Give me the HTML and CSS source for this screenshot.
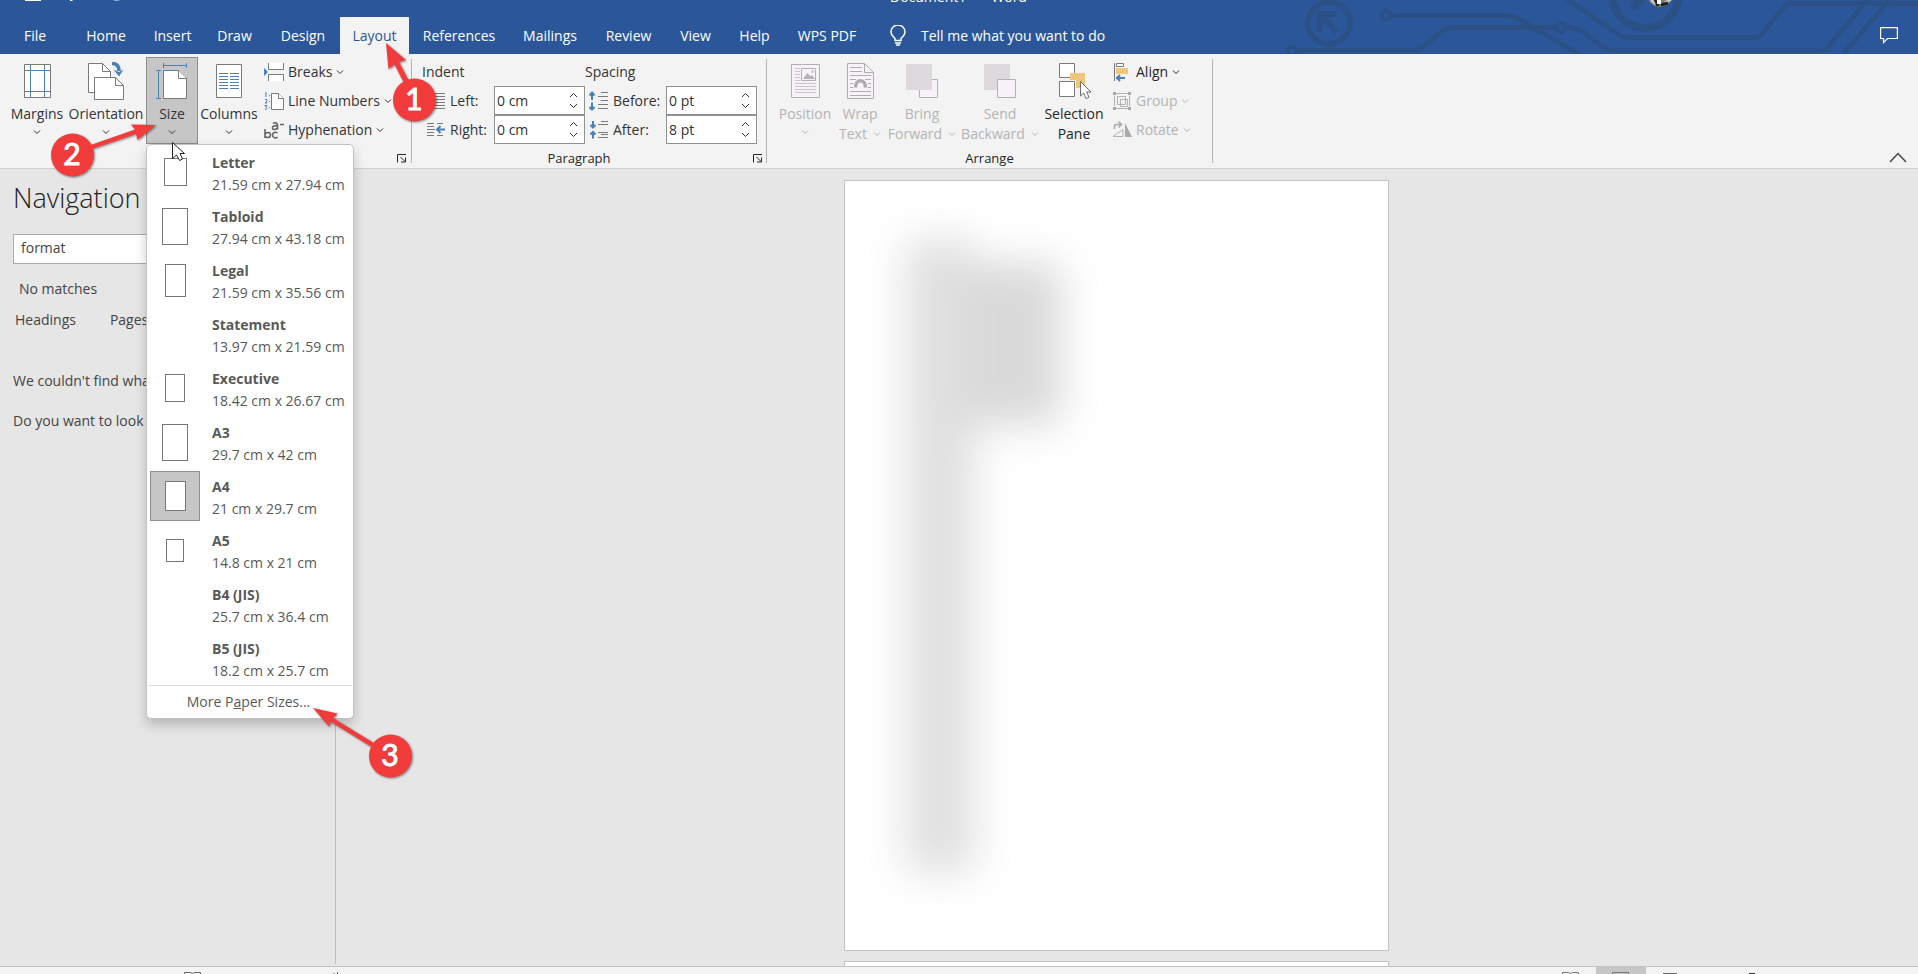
FILE: index.html
```html
<!DOCTYPE html>
<html lang="en">
<head>
<meta charset="utf-8">
<title>Document1 - Word</title>
<link rel="stylesheet" href="styles.css">
</head>
<body>
<svg class="defs" width="0" height="0" aria-hidden="true">
  <symbol id="chev" viewBox="0 0 8 6"><path d="M1 1.5l3 3 3-3" fill="none" stroke="currentColor"/></symbol>
  <symbol id="up" viewBox="0 0 9 6"><path d="M1 5l3.500-3.500L8 5" fill="none" stroke="currentColor"/></symbol>
  <symbol id="down" viewBox="0 0 9 6"><path d="M1 1l3.500 3.500L8 1" fill="none" stroke="currentColor"/></symbol>
  <symbol id="launch" viewBox="0 0 10 9"><path d="M.5 8.500V.5H9M3.500 3l4.500 4.500M8.500 3.500v4.500H4" fill="none" stroke="currentColor"/></symbol>
</svg>

<header class="top">
  <svg class="circuit" viewBox="0 0 648 54" width="648" height="54" fill="none" stroke="#2b5086" stroke-width="5" aria-hidden="true">
    <circle cx="59" cy="23" r="21" stroke-width="6"/>
    <path d="M67 14H50V32M51 15l16 17" stroke-width="6"/>
    <circle cx="116" cy="15" r="4.500" stroke-width="4"/>
    <path d="M122 15.500H238C245 15.500 249 19 254 22L310 55"/>
    <circle cx="22" cy="51" r="4.500" stroke-width="4"/>
    <path d="M26 51H147L174 30Q177 27.500 181 27.500H286"/>
    <circle cx="291" cy="27.500" r="4.500" stroke-width="4"/>
    <path d="M297 27.500C308 27 314 32 320 37L336 49Q338 50.500 341 50.500H550Q555 50.500 558 47L600-3"/>
    <path d="M294-3L350 35.500Q353 37.500 356 37.500H486Q489 37.500 491 35L515 6Q517 3.500 520 3.500H648M573 54L622-3"/>
    <circle cx="375.500" cy="-5" r="33" stroke-width="8"/>
    <path d="M362 8L376-6" stroke-width="8"/>
    <circle cx="390" cy="-6" r="13" fill="#777" stroke="none"/>
    <path d="M381 0l5 4M395 3l6-4" stroke="#c4c4c4" stroke-width="3"/>
    <path d="M385-1l3 7M391 5l7-2" stroke="#222" stroke-width="3"/>
    <path d="M389-1v5" stroke="#fff" stroke-width="4"/>
  </svg>
  <div class="titlebar">
    <svg width="130" height="3" viewBox="0 0 130 3" fill="#fff" aria-hidden="true"><path d="M25 0h16v1H25zM70 0h3l-1 1h-2z"/><path d="M113 0h7l-2 1h-3z" opacity=".5"/></svg>
    <p class="doc-title"><span>Document1</span><span>Word</span></p>
  </div>
  <nav class="tabs" aria-label="Ribbon tabs">
    <button>File</button><button>Home</button><button>Insert</button><button>Draw</button><button>Design</button><button class="active">Layout</button><button>References</button><button>Mailings</button><button>Review</button><button>View</button><button>Help</button><button>WPS PDF</button>
    <button class="tell">
      <svg width="16" height="21" viewBox="0 0 16 21" fill="none" stroke="#fff" stroke-width="1.500"><path d="M5 15.500V13.500C3.500 11.500 1 10.500 1 7A6.500 6.500 0 0 1 15 7C15 10.500 12.500 11.500 11 13.500V15.500ZM5 18h6M6 20h4"/></svg>
      Tell me what you want to do</button>
    <button class="comment" aria-label="Comments"><svg width="18" height="17" viewBox="0 0 18 17" fill="none" stroke="#fff" stroke-width="1.200"><path d="M.6.6H17.400V11.500H7.500L3.500 15.500V11.500H.6Z"/></svg></button>
  </nav>
</header>

<section class="ribbon" aria-label="Layout ribbon">
  <div class="group setup">
    <div class="big-row">
      <button class="big">
        <svg width="36" height="38" viewBox="0 0 36 38" fill="none"><path d="M5.500 2.500h26v33h-26z" fill="#fff" stroke="#7a7a7a"/><path d="M11.500 3v32M25.500 3v32M6 8.500h25M6 29.500h25" stroke="#4a81b8"/></svg>
        <span>Margins</span><svg class="chev low"><use href="#chev"/></svg></button>
      <button class="big">
        <svg width="36" height="38" viewBox="0 0 36 38" fill="#fff" stroke="#7a7a7a"><path d="M6.500 30.500H.5V1.500H14.500L22.500 9.500V20H6.500Z"/><path d="M14.500 1.500V9.500H22.500" fill="none"/><path d="M6.500 15.500H27.500L35.500 23.500V37.500H6.500Z"/><path d="M27.500 15.500V23.500H35.500" fill="none"/><path d="M24 1.500C28.500 1.500 31 4 31 9" fill="none" stroke="#4a81b8" stroke-width="3.500"/><path d="M25.500 7.500L31 10L35.500 7.500L31 14.500Z" fill="#4a81b8" stroke="none"/></svg>
        <span>Orientation</span><svg class="chev low"><use href="#chev"/></svg></button>
      <div class="size-wrap">
        <button class="big pressed" aria-expanded="true">
          <svg width="36" height="38" viewBox="0 0 36 38" fill="#fff" stroke="#7a7a7a"><path d="M9.500 8.500H24.500L32.500 16.500V36.500H9.500Z"/><path d="M24.500 8.500V16.500H32.500"/><path d="M9.500 3.500H32.500M9.500 1v5M32.500 1v5M4.500 8.500V36.500M2 8.500h5M2 36.500h5" stroke="#4a81b8"/></svg>
          <span>Size</span><svg class="chev low"><use href="#chev"/></svg></button>
        <div class="menu" role="menu">
          <button class="item" role="menuitem"><span class="thumb"><i class="sheet letter"></i></span><span class="names"><b>Letter</b><span>21.59 cm x 27.94 cm</span></span></button>
          <button class="item" role="menuitem"><span class="thumb"><i class="sheet large"></i></span><span class="names"><b>Tabloid</b><span>27.94 cm x 43.18 cm</span></span></button>
          <button class="item" role="menuitem"><span class="thumb"><i class="sheet legal"></i></span><span class="names"><b>Legal</b><span>21.59 cm x 35.56 cm</span></span></button>
          <button class="item" role="menuitem"><span class="thumb"></span><span class="names"><b>Statement</b><span>13.97 cm x 21.59 cm</span></span></button>
          <button class="item" role="menuitem"><span class="thumb"><i class="sheet exec"></i></span><span class="names"><b>Executive</b><span>18.42 cm x 26.67 cm</span></span></button>
          <button class="item" role="menuitem"><span class="thumb"><i class="sheet large"></i></span><span class="names"><b>A3</b><span>29.7 cm x 42 cm</span></span></button>
          <button class="item" role="menuitem"><span class="thumb chosen"><i class="sheet a4"></i></span><span class="names"><b>A4</b><span>21 cm x 29.7 cm</span></span></button>
          <button class="item" role="menuitem"><span class="thumb"><i class="sheet a5"></i></span><span class="names"><b>A5</b><span>14.8 cm x 21 cm</span></span></button>
          <button class="item" role="menuitem"><span class="thumb"></span><span class="names"><b>B4 (JIS)</b><span>25.7 cm x 36.4 cm</span></span></button>
          <button class="item" role="menuitem"><span class="thumb"></span><span class="names"><b>B5 (JIS)</b><span>18.2 cm x 25.7 cm</span></span></button>
          <button class="more" role="menuitem">More P<u>a</u>per Sizes...</button>
        </div>
      </div>
      <button class="big">
        <svg width="36" height="38" viewBox="0 0 36 38" fill="none"><path d="M5.500 2.500h25v33h-25z" fill="#fff" stroke="#7a7a7a"/><path d="M8 11.500h9M19 11.500h9M8 14.500h9M19 14.500h9M8 17.500h9M19 17.500h9M8 20.500h9M19 20.500h9M8 23.500h9M19 23.500h9M8 26.500h9M19 26.500h9" stroke="#4a81b8"/></svg>
        <span>Columns</span><svg class="chev low"><use href="#chev"/></svg></button>
      <div class="stack">
        <button><svg width="20" height="20" viewBox="0 0 20 20" fill="#fff" stroke="#7a7a7a"><path d="M4.500 1v6.500h15V1"/><path d="M4.500 19v-6.500h15V19"/><path d="M0 6l4 4-4 4z" fill="#4a81b8" stroke="none"/></svg>Breaks<svg class="chev"><use href="#chev"/></svg></button>
        <button><svg width="20" height="20" viewBox="0 0 20 20" fill="#fff" stroke="#7a7a7a"><path d="M7.500 2.500h7l5 5v11h-12z"/><path d="M14.500 2.500v5h5"/><path d="M1 2.500l1-1V6M1 8.500h2v1.500l-2 2h2.500M.5 14.500h2.500l-1.500 1.500c2 0 2 2.500-.5 2.500M5 4.500h1M5 10.500h1M5 16.500h1" fill="none" stroke="#4a81b8"/></svg>Line Numbers<svg class="chev"><use href="#chev"/></svg></button>
        <button><svg width="20" height="20" viewBox="0 0 20 20" fill="none" stroke="#5f5f5f" stroke-width="1.500"><path d="M1 9v9M1 14.500c1-3 5.500-2.500 5.500.5s-4.500 3.500-5.500 1M13.500 13c-2-1.500-5-.5-5 2s3 4 5 2M9 3.500c2-1.500 4.500-.5 4.500 1.500v4.500M13.500 5.500C9 5.500 8 7 8.500 8.500s4 1.500 5-1M16 4.500h4"/></svg>Hyphenation<svg class="chev"><use href="#chev"/></svg></button>
      </div>
    </div>
    <div class="caption"><span></span><button aria-label="Page Setup settings"><svg width="10" height="9"><use href="#launch"/></svg></button></div>
  </div>
  <div class="sep"></div>

  <div class="group para">
    <div class="para-cols">
      <div class="fields indent">
        <p>Indent</p>
        <div class="row"><svg width="20" height="20" viewBox="0 0 20 20" stroke="#7a7a7a"><path d="M2 2.500h17M9 5.500h10M9 8.500h10M9 11.500h10M9 14.500h10M2 17.500h17"/></svg>
          <label for="il">Left:</label><div class="spin"><input id="il" value="0 cm"><span class="arrows"><button aria-label="More"><svg width="9" height="6"><use href="#up"/></svg></button><button aria-label="Less"><svg width="9" height="6"><use href="#down"/></svg></button></span></div></div>
        <div class="row"><svg width="20" height="20" viewBox="0 0 20 20" stroke="#7a7a7a"><path d="M1 3.500h7M11 3.500h6M1 6.500h7M1 9.500h8M1 12.500h7M1 15.500h7M11 15.500h6"/><path d="M11 9.500h8M14.500 6l-3.500 3.500 3.500 3.500" fill="none" stroke="#4a81b8" stroke-width="2"/></svg>
          <label for="ir">Right:</label><div class="spin"><input id="ir" value="0 cm"><span class="arrows"><button aria-label="More"><svg width="9" height="6"><use href="#up"/></svg></button><button aria-label="Less"><svg width="9" height="6"><use href="#down"/></svg></button></span></div></div>
      </div>
      <div class="fields spacing">
        <p>Spacing</p>
        <div class="row"><svg width="20" height="20" viewBox="0 0 20 20" stroke="#7a7a7a"><path d="M12 1.500h7M9 5.500h10M12 9.500h7M9 13.500h10M9 17.500h10" /><path d="M3 2v7M.5 4.500L3 1.500l2.500 3M3 11.500v7M.5 16L3 18.500l2.500-2.500" fill="none" stroke="#4a81b8" stroke-width="2"/></svg>
          <label for="sb">Before:</label><div class="spin"><input id="sb" value="0 pt"><span class="arrows"><button aria-label="More"><svg width="9" height="6"><use href="#up"/></svg></button><button aria-label="Less"><svg width="9" height="6"><use href="#down"/></svg></button></span></div></div>
        <div class="row"><svg width="20" height="20" viewBox="0 0 20 20" stroke="#7a7a7a"><path d="M12 1.500h7M9 4.500h10M9 12.500h10M12 14.500h7M9 17.500h10"/><path d="M4 1v6M1.500 5L4 7.500 6.500 5M4 12.500v6M1.500 14.500L4 12l2.500 2.500" fill="none" stroke="#4a81b8" stroke-width="2"/></svg>
          <label for="sa">After:</label><div class="spin"><input id="sa" value="8 pt"><span class="arrows"><button aria-label="More"><svg width="9" height="6"><use href="#up"/></svg></button><button aria-label="Less"><svg width="9" height="6"><use href="#down"/></svg></button></span></div></div>
      </div>
    </div>
    <div class="caption"><span>Paragraph</span><button aria-label="Paragraph settings"><svg width="10" height="9"><use href="#launch"/></svg></button></div>
  </div>
  <div class="sep"></div>

  <div class="group arrange">
    <div class="big-row">
      <button class="big" disabled>
        <svg width="36" height="38" viewBox="0 0 36 38" fill="none" stroke="#b5b0b5"><path d="M4.500 2.500h28v33h-28z" fill="#f6f2f7"/><path d="M14.500 6.500h14v12h-14z"/><path d="M16 17l4.500-6 3 3.500 1.500-1.500 3 4z" fill="#b5b0b5" stroke="none"/><circle cx="25.500" cy="9.500" r="1.500" fill="#cbc6cb" stroke="none"/><path d="M8 6.500h5M8 9.500h5M8 12.500h5M8 15.500h5M8 18.500h5M8 21.500h21M8 24.500h21M8 27.500h21M8 30.500h21" stroke="#cbc6cb"/></svg>
        <span>Position</span><svg class="chev low"><use href="#chev"/></svg></button>
      <button class="big" disabled>
        <svg width="36" height="38" viewBox="0 0 36 38" fill="none" stroke="#b0adb0"><path d="M5.500 1.500h17l9 9v26h-26z" fill="#f6f2f7"/><path d="M22.500 1.500v9h9M8 5.500h12M8 9.500h12M8 13.500h21M8 17.500h6M23 17.500h6M8 21.500h3M26 21.500h3M8 25.500h3M26 25.500h3M8 29.500h21M8 33.500h21"/><path d="M13.500 25.500c0-9 10-9 10 0" stroke-width="3.500"/></svg>
        <span>Wrap</span><span class="line2">Text<svg class="chev"><use href="#chev"/></svg></span></button>
      <button class="big" disabled>
        <svg width="36" height="38" viewBox="0 0 36 38"><path d="M15.500 17.500h18v18h-18z" fill="#f6f2f7" stroke="#b5b0b5"/><path d="M2 2h26v26H2z" fill="#ddd9dd"/></svg>
        <span>Bring</span><span class="line2">Forward<svg class="chev"><use href="#chev"/></svg></span></button>
      <button class="big" disabled>
        <svg width="36" height="38" viewBox="0 0 36 38"><path d="M2 2h26v26H2z" fill="#ddd9dd"/><path d="M15.500 17.500h18v18h-18z" fill="#f6f2f7" stroke="#b5b0b5"/></svg>
        <span>Send</span><span class="line2">Backward<svg class="chev"><use href="#chev"/></svg></span></button>
      <button class="big">
        <svg width="36" height="38" viewBox="0 0 36 38"><path d="M3.500 1.500h15v14h-15zM3.500 19.500h15v15h-15z" fill="#fff" stroke="#7a7a7a"/><path d="M14 11h15v15h-9v-8h-6z" fill="#efc77c"/><path d="M24.500 19.500v14.500l3.200-3 2.300 5.500 3-1.300-2.400-5.200h4.400z" fill="#fff" stroke="#6f6f6f"/></svg>
        <span>Selection</span><span class="line2">Pane</span></button>
      <div class="stack">
        <button><svg width="20" height="20" viewBox="0 0 20 20" fill="none"><path d="M2.500 1v18M4.500 1.500h7v3h-7z" fill="#fff" stroke="#7a7a7a"/><path d="M4 6h12v6H4z" fill="#efc77c"/><path d="M4 16h9M8 13l-3 3 3 3" stroke="#4a81b8" stroke-width="2"/></svg>Align<svg class="chev"><use href="#chev"/></svg></button>
        <button disabled><svg width="20" height="20" viewBox="0 0 20 20" fill="none" stroke="#b5b0b5"><path d="M5.500 5.500h8v8h-8zM8.500 8.500h7v7h-7zM4 2.500h12M4 17.500h12M2.500 5v10M17.500 5v10"/><path d="M1 1h3v3H1zM16 1h3v3h-3zM1 16h3v3H1zM16 16h3v3h-3z" fill="#a9a5a9" stroke="none"/></svg>Group<svg class="chev"><use href="#chev"/></svg></button>
        <button disabled><svg width="20" height="20" viewBox="0 0 20 20" fill="none" stroke="#b5b0b5"><path d="M1 16.500L11 9.500v7z"/><path d="M13 3v14h7z" fill="#aaa" stroke="none"/><path d="M2.500 9V6.500q0-2 2-2H9M6.500 1.500l3 3-3 3" stroke="#aaa" stroke-width="1.500"/></svg>Rotate<svg class="chev"><use href="#chev"/></svg></button>
      </div>
    </div>
    <div class="caption"><span>Arrange</span></div>
  </div>
  <div class="sep"></div>
  <button class="collapse" aria-label="Collapse the ribbon"><svg width="18" height="11" viewBox="0 0 18 11" fill="none" stroke="#444" stroke-width="1.500"><path d="M1 10l8-8.500L17 10"/></svg></button>
</section>

<main class="work">
  <aside class="nav">
    <h1>Navigation</h1>
    <input class="search" aria-label="Search document" value="format">
    <p class="result">No matches</p>
    <div class="nav-tabs"><button>Headings</button><button>Pages</button></div>
    <p>We couldn't find what</p>
    <p>Do you want to look</p>
  </aside>
  <section class="canvas" aria-label="Document">
    <div class="page">
      <svg width="543" height="769" viewBox="0 0 543 769" aria-hidden="true">
        <filter id="soft" x="-50%" y="-50%" width="200%" height="200%"><feGaussianBlur stdDeviation="21"/></filter>
        <g filter="url(#soft)"><path d="M60 58h70v634H60z" fill="#e0e0e0"/><path d="M116 82h100v162H116z" fill="#d9d9d9"/></g>
      </svg>
    </div>
    <div class="page"></div>
  </section>
</main>

<footer class="status">
  <svg width="160" height="7" viewBox="0 0 160 7" fill="none" stroke="#666"><path d="M.5 8V5.500h6l2 1 2-1h6V8M150 7v-1M153.500 7V5"/></svg>
  <div class="views">
    <svg width="17" height="7" viewBox="0 0 17 7" fill="none" stroke="#777"><path d="M.5 8V5.500h6l2 1 2-1h6V8"/></svg>
    <span class="view-on"><svg width="17" height="7" viewBox="0 0 17 7" fill="none" stroke="#777"><path d="M.5 8V5.500h16V8"/></svg></span>
    <svg width="92" height="7" viewBox="0 0 92 7" fill="none" stroke="#666"><path d="M0 6.500h14"/><path d="M86 6.500h6" stroke="#333"/></svg>
  </div>
</footer>

<svg class="callouts" width="450" height="800" viewBox="0 0 450 800" aria-hidden="true">
  <path d="M172.500 142.500v16l4-3.500 3 5.500 3-1.500-2.500-5.500h4.500z" fill="#fff" stroke="#222"/>
  <g class="marks" fill="#f23c3c">
    <path d="M386 43L406 60 399 62 409 81 404 83 394.500 64.500 388.500 69Z"/>
    <path d="M156 125L137.500 140 136 134 92 149 90.500 145 135 129.500 131 124.500Z"/>
    <path d="M313 708L337.500 713.500 333 718 374 743 371.500 747 330.500 721.500 329 726.500Z"/>
    <circle cx="414.500" cy="100" r="21.500"/><circle cx="72.500" cy="155" r="21.500"/><circle cx="390.500" cy="756" r="21.500"/>
  </g>
  <g class="digits"><text x="414" y="110">1</text><text x="72" y="165">2</text><text x="390" y="766">3</text></g>
</svg>
</body>
</html>
```

FILE: styles.css
```css
* { box-sizing: border-box; }
body {
  margin: 0; height: 100vh; overflow: hidden; position: relative;
  display: flex; flex-direction: column;
  font: 14px/20px "Open Sans", "Noto Sans", sans-serif; color: #444; background: #e6e6e6;
}
button { font: inherit; color: inherit; background: none; border: 0; padding: 0; white-space: nowrap; text-align: left; }
input { font: inherit; color: inherit; border-radius: 0; }
p, h1 { margin: 0; }
svg { flex: none; display: block; }
.defs { position: absolute; }

.top { position: relative; flex: none; background: #2b579a; color: #fff; }
.circuit { position: absolute; right: 0; top: 0; }
.titlebar { position: relative; height: 17px; display: flex; }
.doc-title { margin-left: 760px; height: 7px; display: flex; align-items: flex-end; gap: 25px; }
.tabs {
  position: relative; height: 37px; display: grid;
  grid-template-columns: 70px 72px 61px 63px 74px 69px 100px 82px 75px 59px 59px 86px 1fr auto;
}
.tabs button { text-align: center; }
.tabs .active { background: #f3f3f3; color: #2b579a; }
.tabs .tell { display: flex; align-items: center; gap: 15px; padding-left: 20px; }
.tabs .comment { display: flex; align-items: center; padding-right: 20px; }

.ribbon {
  position: relative; z-index: 2; flex: none; display: flex; padding-top: 3px;
  background: #f3f3f3; border-bottom: 1px solid #d0d0d0; color: #333;
}
.group { display: grid; grid-template-rows: 87px 20px; row-gap: 4px; }
.setup { width: 411px; }
.para { width: 354px; }
.arrange { width: 445px; }
.sep { width: 1px; margin: 2px 0 5px; background: #b4b4b4; }
.big-row { display: grid; }
.setup .big-row { padding-left: 6px; grid-template-columns: 62px 76px 56px 58px 1fr; }
.arrange .big-row { padding-left: 4px; grid-template-columns: 68px 42px 82px 74px 74px 1fr; }
.big { display: flex; flex-direction: column; align-items: center; padding-top: 5px; width: 100%; height: 100%; }
.big > span { margin-top: 4px; }
.big > .line2 { margin-top: 0; display: flex; align-items: center; gap: 6px; }
.chev { width: 8px; height: 6px; }
.low { margin-top: 5px; }
.big:disabled, .stack button:disabled { color: #b3b3b3; }
.arrange { color: #262626; }
.size-wrap { position: relative; margin: 0 2px; }
.pressed { background: #c6c6c6; box-shadow: inset 0 0 0 1px #8c8c8c; }
.stack { display: grid; grid-template-rows: repeat(3, 29px); padding-left: 6px; }
.arrange .stack { padding-left: 1px; }
.stack button { display: flex; align-items: center; gap: 4px; }
.caption { display: grid; grid-template-columns: 1fr auto; text-align: center; font-size: 13px; color: #262626; }
.caption button { width: 20px; padding-left: 7px; }
.setup .caption button { padding-left: 6px; }

.para-cols { display: flex; padding-left: 10px; }
.fields { display: grid; grid-template-rows: repeat(3, 29px); align-items: center; }
.row { display: grid; align-items: center; }
.indent .row { grid-template-columns: 28px 44px 91px; }
.spacing .row { grid-template-columns: 28px 53px 91px; }
.row > svg { margin-left: 4px; }
.row label { white-space: nowrap; }
.spin { display: flex; height: 29px; border: 1px solid #919191; background: #fff; }
.spin input { flex: 1; min-width: 0; border: 0; padding: 0 2px; background: none; }
.arrows { display: grid; width: 22px; padding: 2px 0; }
.arrows button { display: grid; place-items: center; }
.collapse { margin-left: auto; align-self: flex-end; padding: 0 11px 5px 0; }

.menu {
  position: absolute; left: 0; top: 100%; width: 208px;
  background: #fff; border: 1px solid #c2c2c2; border-radius: 5px;
  box-shadow: 0 6px 12px rgba(0, 0, 0, .2); color: #595959;
}
.item { display: flex; align-items: center; gap: 12px; width: 100%; height: 54px; padding-left: 3px; }
.thumb { width: 50px; height: 50px; display: grid; place-items: center; flex: none; }
.chosen { background: #c6c6c6; border: 1px solid #8f8f8f; }
.sheet { background: #fff; border: 1px solid #777; }
.letter { width: 23px; height: 28px; }
.large { width: 26px; height: 37px; }
.legal { width: 21px; height: 33px; }
.exec { width: 20px; height: 28px; }
.a4 { width: 21px; height: 30px; }
.a5 { width: 18px; height: 23px; }
.names { display: grid; line-height: 22px; padding-top: 4px; }
.more { display: block; width: calc(100% - 2px); margin: 0 1px; height: 33px; border-top: 1px solid #dcdcdc; padding-right: 3px; text-align: center; }

.work { flex: 1; min-height: 0; display: flex; }
.nav { width: 336px; margin-bottom: 2px; border-right: 1px solid #bcbcbc; padding: 13px 13px 0; }
.nav h1 { font-size: 27px; line-height: 32px; font-weight: 300; color: #222; }
.nav .search { display: block; width: 100%; height: 30px; margin-top: 20px; border: 1px solid #ababab; background: #fff; padding: 0 7px 3px; }
.nav .result { margin: 15px 0 11px 6px; }
.nav-tabs { display: flex; gap: 34px; padding-left: 2px; margin-bottom: 41px; }
.nav p + p { margin-top: 20px; }
.canvas { flex: 1; display: flex; flex-direction: column; align-items: center; gap: 10px; padding: 11px 22px 0 0; overflow: hidden; }
.page { flex: none; width: 545px; height: 771px; background: #fff; border: 1px solid #c3c3c3; }

.status { flex: none; height: 8px; display: flex; justify-content: space-between; background: #f3f3f3; border-top: 1px solid #c3c3c3; padding: 0 163px 0 184px; overflow: hidden; }
.views { display: flex; gap: 17px; }
.view-on { background: #c6c6c6; width: 50px; padding-left: 16px; }

.callouts { position: absolute; left: 0; top: 0; z-index: 5; pointer-events: none; }
.marks { filter: drop-shadow(1px 1px 1px rgba(0, 0, 0, .45)); }
.digits { font: 400 30px Lato, sans-serif; fill: #fff; stroke: #fff; stroke-width: 1px; text-anchor: middle; }
```
